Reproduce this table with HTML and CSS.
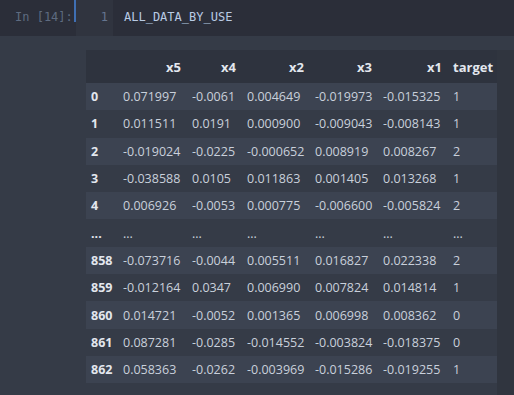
FILE: index.html
```html
<!DOCTYPE html>
<html lang="en">
<head>
  <meta charset="UTF-8">
  <title>Notebook cell</title>
  <link rel="stylesheet" href="styles.css">
</head>
<body>
  <div class="input-cell">
    <div class="prompt">In [14]:</div>
    <div class="editor">
      <div class="gutter">1</div>
      <div class="code">ALL_DATA_BY_USE</div>
    </div>
  </div>

  <div class="output-area">
    <div class="output-main">
      <table class="dataframe">
        <colgroup>
          <col class="c-idx"><col class="c-x5"><col class="c-x4"><col class="c-x2"><col class="c-x3"><col class="c-x1"><col class="c-target">
        </colgroup>
        <thead>
          <tr><th></th><th>x5</th><th>x4</th><th>x2</th><th>x3</th><th>x1</th><th>target</th></tr>
        </thead>
        <tbody>
          <tr><th>0</th><td>0.071997</td><td>-0.0061</td><td>0.004649</td><td>-0.019973</td><td>-0.015325</td><td>1</td></tr>
          <tr><th>1</th><td>0.011511</td><td>0.0191</td><td>0.000900</td><td>-0.009043</td><td>-0.008143</td><td>1</td></tr>
          <tr><th>2</th><td>-0.019024</td><td>-0.0225</td><td>-0.000652</td><td>0.008919</td><td>0.008267</td><td>2</td></tr>
          <tr><th>3</th><td>-0.038588</td><td>0.0105</td><td>0.011863</td><td>0.001405</td><td>0.013268</td><td>1</td></tr>
          <tr><th>4</th><td>0.006926</td><td>-0.0053</td><td>0.000775</td><td>-0.006600</td><td>-0.005824</td><td>2</td></tr>
          <tr><th>...</th><td>...</td><td>...</td><td>...</td><td>...</td><td>...</td><td>...</td></tr>
          <tr><th>858</th><td>-0.073716</td><td>-0.0044</td><td>0.005511</td><td>0.016827</td><td>0.022338</td><td>2</td></tr>
          <tr><th>859</th><td>-0.012164</td><td>0.0347</td><td>0.006990</td><td>0.007824</td><td>0.014814</td><td>1</td></tr>
          <tr><th>860</th><td>0.014721</td><td>-0.0052</td><td>0.001365</td><td>0.006998</td><td>0.008362</td><td>0</td></tr>
          <tr><th>861</th><td>0.087281</td><td>-0.0285</td><td>-0.014552</td><td>-0.003824</td><td>-0.018375</td><td>0</td></tr>
          <tr><th>862</th><td>0.058363</td><td>-0.0262</td><td>-0.003969</td><td>-0.015286</td><td>-0.019255</td><td>1</td></tr>
        </tbody>
      </table>
    </div>
    <div class="output-scroll"></div>
  </div>
</body>
</html>
```

FILE: styles.css
```css
body {
  margin: 0;
  background-color: #353b47;
  font-family: "Open Sans", "DejaVu Sans", sans-serif;
  overflow: hidden;
}
.input-cell {
  display: flex;
  height: 36px;
  background-color: #2b2e39;
}
.prompt {
  width: 76px;
  box-sizing: border-box;
  padding: 10px 0 0 15px;
  font-family: "DejaVu Sans Mono", monospace;
  font-size: 12px;
  color: #5e6b80;
  border-right: 2px solid #3f6fb3;
  height: 22px;
}
.editor {
  display: flex;
  flex: 1;
  height: 36px;
}
.gutter {
  width: 37px;
  box-sizing: border-box;
  background-color: #30343f;
  padding: 10px 5px 0 0;
  text-align: right;
  font-family: "DejaVu Sans Mono", monospace;
  font-size: 12px;
  color: #657590;
}
.code {
  padding: 10px 0 0 11px;
  font-family: "DejaVu Sans Mono", monospace;
  font-size: 12px;
  color: #b9cbe4;
}
.output-area {
  display: flex;
}
.output-main {
  width: 497px;
  box-sizing: border-box;
  padding: 14px 0 12px 86px;
}
.output-scroll {
  flex: 1;
  margin-top: 14px;
  background-color: #30353f;
}
.dataframe {
  border-collapse: collapse;
  table-layout: fixed;
  width: 411px;
  font-size: 12.5px;
  color: #c9d0db;
}
.c-idx { width: 32px; }
.c-x5 { width: 69px; }
.c-x4 { width: 55px; }
.c-x2 { width: 68px; }
.c-x3 { width: 68px; }
.c-x1 { width: 70px; }
.c-target { width: 49px; }
.dataframe th,
.dataframe td {
  padding: 0 6px 0 5px;
  white-space: nowrap;
  overflow: hidden;
}
.dataframe thead tr {
  height: 33px;
  background-color: #2e333e;
}
.dataframe thead th {
  text-align: right;
  font-weight: bold;
  font-size: 13px;
  color: #e3e7ee;
}
.dataframe thead th:last-child {
  padding-right: 4px;
}
.dataframe tbody tr {
  height: 27.3px;
  background-color: #353b47;
}
.dataframe tbody tr:nth-child(odd) {
  background-color: #3c4351;
}
.dataframe tbody th {
  text-align: left;
  font-weight: bold;
  color: #e3e7ee;
}
.dataframe td {
  text-align: left;
}
```
